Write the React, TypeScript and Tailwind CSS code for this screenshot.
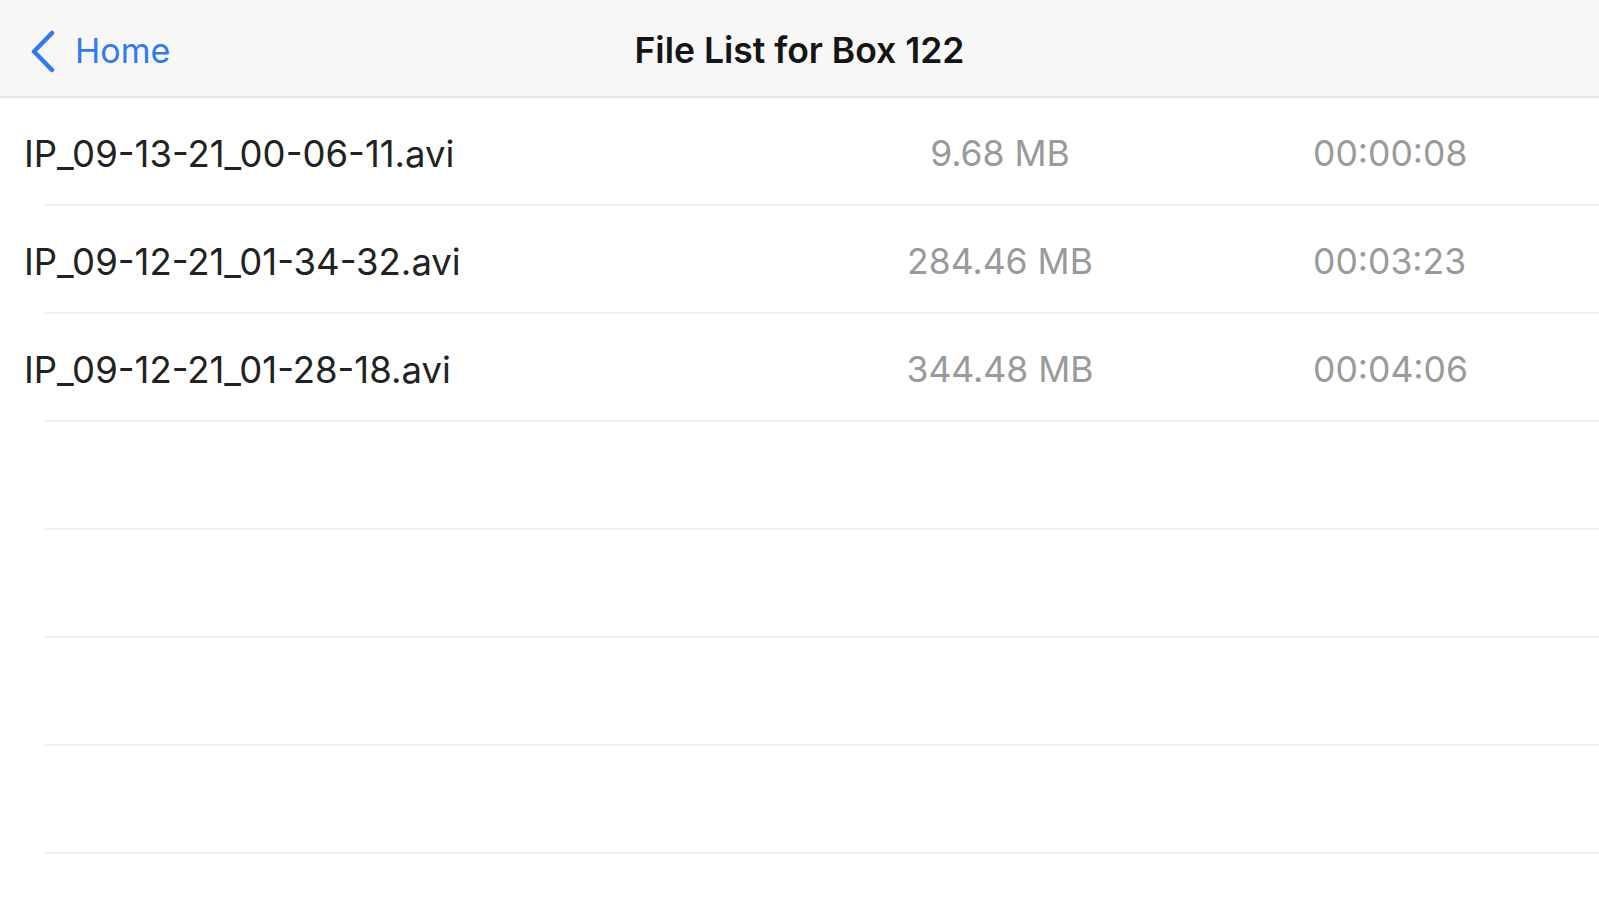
import React from "react";

const rows = [
  { name: "IP_09-13-21_00-06-11.avi", size: "9.68 MB", dur: "00:00:08" },
  { name: "IP_09-12-21_01-34-32.avi", size: "284.46 MB", dur: "00:03:23" },
  { name: "IP_09-12-21_01-28-18.avi", size: "344.48 MB", dur: "00:04:06" },
  null,
  null,
  null,
  null,
];

export default function App() {
  return (
    <div className="w-[1599px] h-[900px] overflow-hidden bg-white font-['Inter','Liberation_Sans',sans-serif]">
      <header className="h-[98px] pt-[6px] bg-[#f7f7f7] border-b-2 border-[#e6e6e6] grid grid-cols-[1fr_auto_1fr] items-center">
        <div className="flex items-center pl-[29px] gap-[19px] text-[#2f7bf5]">
          <svg width="27" height="43" viewBox="0 0 27 43" fill="none">
            <path d="M23 3 L5 21.5 L23 40" stroke="currentColor" strokeWidth="4.5" strokeLinecap="round" strokeLinejoin="round" />
          </svg>
          <span className="text-[34px] leading-none">Home</span>
        </div>
        <div className="text-[35.5px] font-semibold text-[#151515] leading-none">File List for Box 122</div>
        <div />
      </header>
      <div className="flex flex-col">
        {rows.map((r, i) => (
          <div key={i} className="flex flex-col">
            <div className="h-[106px] pt-[6px] grid grid-cols-[826px_300px_1fr] items-center pl-[24px] text-[35.5px] leading-none">
              <div className="text-[36.5px] text-[#222222]">{r ? r.name : ""}</div>
              <div className="text-center text-[#9a9a9a]">{r ? r.size : ""}</div>
              <div className="pl-[163px] text-[#9a9a9a]">{r ? r.dur : ""}</div>
            </div>
            <div className="ml-[45px] h-[2px] bg-[#f0f0f0]" />
          </div>
        ))}
      </div>
    </div>
  );
}
